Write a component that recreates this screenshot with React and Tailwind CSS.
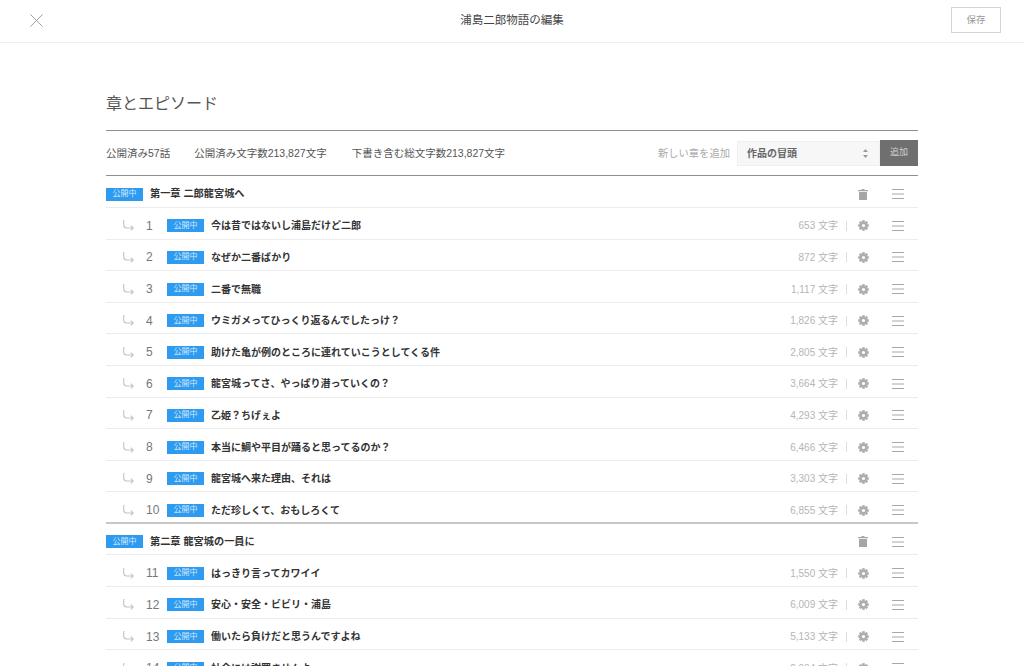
const FONT = "font-['Liberation_Sans','Noto_Sans_CJK_JP',sans-serif]";

const chapters = [
  {
    title: "第一章 二郎龍宮城へ",
    eps: [
      [1, "今は昔ではないし浦島だけど二郎", "653"],
      [2, "なぜか二番ばかり", "872"],
      [3, "二番で無職", "1,117"],
      [4, "ウミガメってひっくり返るんでしたっけ？", "1,826"],
      [5, "助けた亀が例のところに連れていこうとしてくる件", "2,805"],
      [6, "龍宮城ってさ、やっぱり潜っていくの？", "3,664"],
      [7, "乙姫？ちげぇよ", "4,293"],
      [8, "本当に鯛や平目が踊ると思ってるのか？", "6,466"],
      [9, "龍宮城へ来た理由、それは", "3,303"],
      [10, "ただ珍しくて、おもしろくて", "6,855"],
    ],
  },
  {
    title: "第二章 龍宮城の一員に",
    eps: [
      [11, "はっきり言ってカワイイ", "1,550"],
      [12, "安心・安全・ビビリ・浦島", "6,009"],
      [13, "働いたら負けだと思うんですよね", "5,133"],
      [14, "社会には謝罪ませんよ", "2,934"],
    ],
  },
];

function Badge() {
  return (
    <span className="flex h-[13px] w-[37px] shrink-0 items-center justify-center bg-[#2e9bf0] text-[8px] leading-none text-[#cfe8fb]">
      公開中
    </span>
  );
}

function Menu() {
  return (
    <svg width="12" height="10" viewBox="0 0 12 10" className="shrink-0" aria-hidden="true">
      <path d="M0 .5h12M0 5h12M0 9.5h12" stroke="#a8a8a8" strokeWidth="1" fill="none" />
    </svg>
  );
}

function Trash() {
  return (
    <svg width="10" height="11" viewBox="0 0 10 11" className="shrink-0" aria-hidden="true">
      <path d="M3.5 0h3v1H10v1.2H0V1h3.5zM1 3h8v8H1z" fill="#a6a6a6" />
    </svg>
  );
}

function Gear() {
  const teeth = [0, 45, 90, 135];
  return (
    <svg width="11" height="11" viewBox="0 0 12 12" className="shrink-0" aria-hidden="true">
      {teeth.map((a) => (
        <rect key={a} x="4.6" y="0.2" width="2.8" height="11.6" fill="#aeaeae" transform={`rotate(${a} 6 6)`} />
      ))}
      <circle cx="6" cy="6" r="4.2" fill="#aeaeae" />
      <circle cx="6" cy="6" r="1.7" fill="#fff" />
    </svg>
  );
}

function Arrow() {
  return (
    <svg width="11" height="11" viewBox="0 0 11 11" className="shrink-0" aria-hidden="true">
      <path d="M.7 0v5q0 3 3 3h6.6M7.8 5.6L10.3 8l-2.5 2.4" stroke="#c4c4c4" strokeWidth="1.1" fill="none" />
    </svg>
  );
}

function ChapterRow({ title, first }) {
  return (
    <div className={`flex items-center border-b border-[#ececec] pt-[5px] ${first ? "h-[32px]" : "h-[31px]"}`}>
      <Badge />
      <span className="ml-[7px] text-[10.2px] font-bold text-[#333]">{title}</span>
      <div className="ml-auto mr-[14px] flex items-center gap-[24px]">
        <Trash />
        <Menu />
      </div>
    </div>
  );
}

function EpisodeRow({ n, title, count, last }) {
  return (
    <div className={`flex items-center ${last ? "h-[30px] pt-[6px]" : "h-[31.62px] border-b border-[#ececec] pt-[5px]"}`}>
      <div className="ml-[17px] w-[23px] shrink-0"><Arrow /></div>
      <span className="w-[21px] shrink-0 text-[12px] leading-none text-[#777]">{n}</span>
      <Badge />
      <span className="ml-[7px] text-[10px] font-bold text-[#333]">{title}</span>
      <div className="ml-auto mr-[14px] flex items-center">
        <span className="text-[10px] text-[#b5b5b5]">{count} 文字</span>
        <span className="ml-[8px] h-[10px] w-px bg-[#dddddd]" />
        <span className="ml-[11px]"><Gear /></span>
        <span className="ml-[23px]"><Menu /></span>
      </div>
    </div>
  );
}

export default function App() {
  return (
    <div className={`h-[666px] w-[1024px] overflow-hidden bg-white ${FONT}`}>
      <header className="flex h-[43px] items-center border-b border-[#eeeeee] pb-[2px] px-[23px]">
        <div className="flex flex-1 items-center">
          <svg width="13" height="13" viewBox="0 0 13 13" className="ml-[7px]" aria-hidden="true">
            <path d="M.4.4l12.2 12.2M12.6.4L.4 12.6" stroke="#a0a0a0" strokeWidth="1" fill="none" />
          </svg>
        </div>
        <h1 className="pt-[2px] text-[11.5px] font-normal text-[#444]">浦島二郎物語の編集</h1>
        <div className="flex flex-1 justify-end">
          <button className="h-[26px] w-[50px] border border-[#d4d4d4] bg-white text-[9.5px] text-[#999]">保存</button>
        </div>
      </header>

      <main className="mx-[106px] w-[812px]">
        <h2 className="mt-[50px] text-[16px] font-normal leading-[22px] text-[#555]">章とエピソード</h2>
        <div className="mt-[15px] flex h-[46px] items-center border-y border-[#8f8f8f] text-[10.5px] text-[#555]">
          <span className="pt-px">公開済み57話</span>
          <span className="ml-[24px] pt-px">公開済み文字数213,827文字</span>
          <span className="ml-[25px] pt-px">下書き含む総文字数213,827文字</span>
          <span className="ml-auto pt-px text-[10.3px] text-[#aaa]">新しい章を追加</span>
          <div className="ml-[7px] flex h-[25px] w-[143px] items-center justify-between border border-[#f0f0f0] bg-[#f7f7f7] pl-[9px] pr-[11px]">
            <span className="text-[10px] font-bold text-[#666]">作品の冒頭</span>
            <svg width="5" height="9" viewBox="0 0 5 9" aria-hidden="true">
              <path d="M2.5 0L5 3H0zM2.5 9L0 6h5z" fill="#999" />
            </svg>
          </div>
          <button className="flex h-[26px] w-[38px] items-center justify-center bg-[#6f6f6f] text-[9px] text-[#d0d0d0]">追加</button>
        </div>

        {chapters.map((c, ci) => (
          <section key={c.title} className={ci > 0 ? "border-t-2 border-[#c8c8c8]" : ""}>
            <ChapterRow title={c.title} first={ci === 0} />
            {c.eps.map(([n, t, w], i) => (
              <EpisodeRow key={n} n={n} title={t} count={w} last={ci === 0 && i === c.eps.length - 1} />
            ))}
          </section>
        ))}
      </main>
    </div>
  );
}
